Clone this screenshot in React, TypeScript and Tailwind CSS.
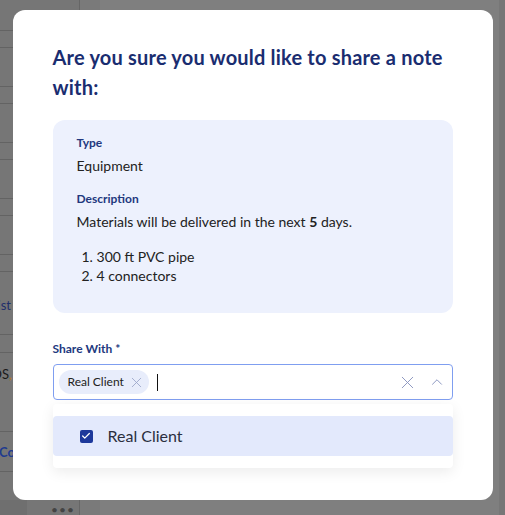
import { X, ChevronUp, Check } from 'lucide-react';

const rows = [31, 17, 39, 17, 39, 17, 39, 17, 39, 17, 63, 18, 79, 40];

function BackgroundPage() {
  return (
    <div className="flex h-full w-full">
      {/* left table column, mostly hidden behind the modal */}
      <div className="flex h-full w-[80px] flex-col border-r border-[#666] bg-[#767676]">
        {rows.map((h, i) => (
          <div key={i} style={{ height: h }} className="relative shrink-0 border-b border-[#636363]">
            {i === 10 && (
              <span className="absolute right-[68px] top-[24px] whitespace-nowrap text-[13px] text-[#1f2f6a]">Checklist</span>
            )}
            {i === 12 && (
              <span className="absolute right-[67px] top-[12px] whitespace-nowrap text-[13px] text-[#1a1a1a]">
                HVAC-POS<span className="text-[#b7791f]">,</span>
              </span>
            )}
            {i === 13 && (
              <span className="absolute left-[-1px] top-[11px] whitespace-nowrap text-[13px] font-bold text-[#1f3b8f]">Copy</span>
            )}
          </div>
        ))}
        <div className="flex-1" />
      </div>
      <div className="w-[20px] bg-[#7a7a7a]" />
      <div className="flex-1 bg-[#7f7f7f]" />
      <div className="w-[6px] bg-[#777]" />
    </div>
  );
}

export default function App() {
  return (
    <div className="relative h-[515px] w-[505px] overflow-hidden bg-[#7f7f7f] font-['Lato',sans-serif]">
      <BackgroundPage />
      <div className="absolute bottom-0 left-0 flex h-[15px] w-full items-end">
        <div className="h-full w-[27px] bg-[#6f6f6f]" />
        <div className="ml-[24px] mb-[-4px] text-[12px] tracking-[1px] text-[#444]">•••</div>
      </div>

      {/* overlay + dialog */}
      <div className="absolute inset-0 flex items-start justify-center pt-[10px]">
        <div className="flex h-[490px] w-[480px] flex-col rounded-[12px] bg-white px-10 pt-8">
          <h2 className="text-[20px] font-bold leading-[30px] tracking-[0.2px] text-[#1a2d70]">
            Are you sure you would like to share a note with:
          </h2>

          <div className="mt-[18px] rounded-[12px] bg-[#edf1fd] px-6 pb-[28px] pt-[15px]">
            <div className="text-[12px] font-bold leading-[16px] text-[#22387e]">Type</div>
            <div className="mt-[5px] text-[14px] leading-[20px] text-[#222]">Equipment</div>
            <div className="mt-[15px] text-[12px] font-bold leading-[16px] text-[#22387e]">Description</div>
            <p className="mt-[5px] text-[14px] leading-[20px] text-[#222]">
              Materials will be delivered in the next <b>5</b> days.
            </p>
            <ol className="mt-[15px] list-inside list-decimal pl-[5px] text-[14px] leading-[19px] text-[#222]">
              <li>300 ft PVC pipe</li>
              <li>4 connectors</li>
            </ol>
          </div>

          <label className="mt-[28px] text-[12px] font-bold leading-[16px] text-[#22387e]">Share With *</label>

          <div className="relative mt-[7px]">
            <div className="flex h-[36px] items-center rounded-[4px] border border-[#7f9ef0] pl-[5px] pr-[6px]">
              <span className="flex h-[24px] items-center gap-[4px] rounded-full bg-[#e8edfb] pl-[9px] pr-[4px] text-[12px] text-[#222]">
                Real Client
                <X size={17} strokeWidth={1.2} className="text-[#9aa4c8]" />
              </span>
              <span className="ml-[8px] h-[17px] w-px bg-[#111]" />
              <div className="flex-1" />
              <X size={21} strokeWidth={1.1} className="text-[#8b96c0]" />
              <ChevronUp size={18} strokeWidth={1.3} className="ml-[10px] text-[#8b96c0]" />
            </div>

            {/* dropdown menu */}
            <div className="absolute left-0 right-0 top-[40px] rounded-[4px] bg-white py-[12px] shadow-[0_4px_14px_rgba(0,0,0,0.08)]">
              <div className="flex h-[40px] items-center rounded-[4px] bg-[#e3e9fc] pl-[27px]">
                <span className="flex h-[13px] w-[13px] items-center justify-center rounded-[2px] bg-[#1d389b]">
                  <Check size={10} strokeWidth={3} className="text-white" />
                </span>
                <span className="ml-[15px] text-[16px] text-[#2b2f3e]">Real Client</span>
              </div>
            </div>
          </div>
        </div>
      </div>
    </div>
  );
}
